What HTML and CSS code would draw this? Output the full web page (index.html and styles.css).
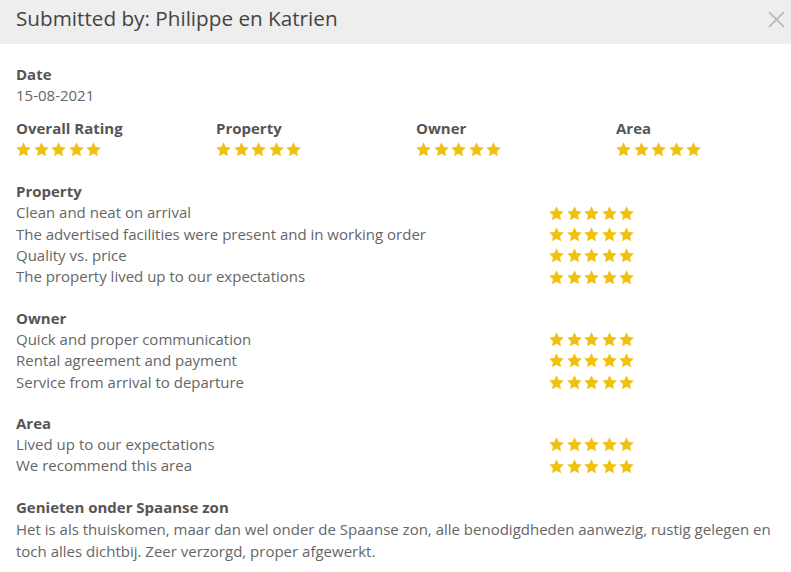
FILE: index.html
```html
<!DOCTYPE html>
<html lang="en">
<head>
<meta charset="utf-8">
<title>Review</title>
<link rel="stylesheet" href="styles.css">
</head>
<body>
<svg width="0" height="0" class="defs">
  <defs>
    <symbol id="star" viewBox="0 0 24 24">
      <path d="M12 1.8l3.1 6.6 7.2.9-5.3 5 1.4 7.1L12 17.9l-6.4 3.5 1.4-7.1-5.3-5 7.2-.9z"/>
    </symbol>
  </defs>
</svg>
<div class="modal">
  <header class="modal-head">
    <h1 class="title">Submitted by: Philippe en Katrien</h1>
    <span class="close" aria-label="Close">
      <svg viewBox="0 0 16 16" width="17" height="17"><path d="M1 1L15 15M15 1L1 15"/></svg>
    </span>
  </header>
  <div class="modal-body">
    <div class="block">
      <div class="label">Date</div>
      <div class="text">15-08-2021</div>
    </div>

    <div class="summary">
      <div class="sum-col">
        <div class="label">Overall Rating</div>
        <div class="stars"><svg><use href="#star"/></svg><svg><use href="#star"/></svg><svg><use href="#star"/></svg><svg><use href="#star"/></svg><svg><use href="#star"/></svg></div>
      </div>
      <div class="sum-col">
        <div class="label">Property</div>
        <div class="stars"><svg><use href="#star"/></svg><svg><use href="#star"/></svg><svg><use href="#star"/></svg><svg><use href="#star"/></svg><svg><use href="#star"/></svg></div>
      </div>
      <div class="sum-col">
        <div class="label">Owner</div>
        <div class="stars"><svg><use href="#star"/></svg><svg><use href="#star"/></svg><svg><use href="#star"/></svg><svg><use href="#star"/></svg><svg><use href="#star"/></svg></div>
      </div>
      <div class="sum-col">
        <div class="label">Area</div>
        <div class="stars"><svg><use href="#star"/></svg><svg><use href="#star"/></svg><svg><use href="#star"/></svg><svg><use href="#star"/></svg><svg><use href="#star"/></svg></div>
      </div>
    </div>

    <div class="section">
      <div class="label">Property</div>
      <div class="row"><span class="text">Clean and neat on arrival</span><span class="stars"><svg><use href="#star"/></svg><svg><use href="#star"/></svg><svg><use href="#star"/></svg><svg><use href="#star"/></svg><svg><use href="#star"/></svg></span></div>
      <div class="row"><span class="text">The advertised facilities were present and in working order</span><span class="stars"><svg><use href="#star"/></svg><svg><use href="#star"/></svg><svg><use href="#star"/></svg><svg><use href="#star"/></svg><svg><use href="#star"/></svg></span></div>
      <div class="row"><span class="text">Quality vs. price</span><span class="stars"><svg><use href="#star"/></svg><svg><use href="#star"/></svg><svg><use href="#star"/></svg><svg><use href="#star"/></svg><svg><use href="#star"/></svg></span></div>
      <div class="row"><span class="text">The property lived up to our expectations</span><span class="stars"><svg><use href="#star"/></svg><svg><use href="#star"/></svg><svg><use href="#star"/></svg><svg><use href="#star"/></svg><svg><use href="#star"/></svg></span></div>
    </div>

    <div class="section">
      <div class="label">Owner</div>
      <div class="row"><span class="text">Quick and proper communication</span><span class="stars"><svg><use href="#star"/></svg><svg><use href="#star"/></svg><svg><use href="#star"/></svg><svg><use href="#star"/></svg><svg><use href="#star"/></svg></span></div>
      <div class="row"><span class="text">Rental agreement and payment</span><span class="stars"><svg><use href="#star"/></svg><svg><use href="#star"/></svg><svg><use href="#star"/></svg><svg><use href="#star"/></svg><svg><use href="#star"/></svg></span></div>
      <div class="row"><span class="text">Service from arrival to departure</span><span class="stars"><svg><use href="#star"/></svg><svg><use href="#star"/></svg><svg><use href="#star"/></svg><svg><use href="#star"/></svg><svg><use href="#star"/></svg></span></div>
    </div>

    <div class="section">
      <div class="label">Area</div>
      <div class="row"><span class="text">Lived up to our expectations</span><span class="stars"><svg><use href="#star"/></svg><svg><use href="#star"/></svg><svg><use href="#star"/></svg><svg><use href="#star"/></svg><svg><use href="#star"/></svg></span></div>
      <div class="row"><span class="text">We recommend this area</span><span class="stars"><svg><use href="#star"/></svg><svg><use href="#star"/></svg><svg><use href="#star"/></svg><svg><use href="#star"/></svg><svg><use href="#star"/></svg></span></div>
    </div>

    <div class="review">
      <div class="review-title">Genieten onder Spaanse zon</div>
      <p class="review-text">Het is als thuiskomen, maar dan wel onder de Spaanse zon, alle benodigdheden aanwezig, rustig gelegen en toch alles dichtbij. Zeer verzorgd, proper afgewerkt.</p>
    </div>
  </div>
</div>
</body>
</html>
```

FILE: styles.css
```css
* { box-sizing: border-box; }

html, body {
  margin: 0;
  padding: 0;
  background: #ffffff;
}

body {
  font-family: "Open Sans", "Liberation Sans", sans-serif;
  font-size: 15px;
  color: #666666;
  overflow: hidden;
}

.defs {
  position: absolute;
  width: 0;
  height: 0;
}

.modal-head {
  height: 44px;
  background: #eeeeee;
  display: flex;
  align-items: center;
  justify-content: space-between;
  padding: 0 6px 0 16px;
}

.title {
  margin: 0;
  font-size: 20.7px;
  font-weight: 400;
  color: #444444;
  line-height: 36px;
  padding-bottom: 8px;
}

.close {
  display: flex;
  width: 17px;
  height: 17px;
  margin-bottom: 6px;
}

.close svg path {
  stroke: #b8b8b8;
  stroke-width: 1.6;
  fill: none;
}

.modal-body {
  padding: 20px 16px 0 16px;
  line-height: 21.3px;
}

.label {
  font-weight: 700;
  color: #555555;
}

.text {
  color: #666666;
}

.summary {
  display: grid;
  grid-template-columns: repeat(4, 200px);
  margin-top: 11px;
  margin-bottom: 21px;
}

.stars {
  display: flex;
  align-items: center;
  gap: 0.5px;
  height: 21.3px;
  margin-left: -1px;
}

.stars svg {
  width: 17px;
  height: 17px;
  fill: #f0c20f;
}

.section {
  margin-bottom: 20px;
}

.row {
  display: grid;
  grid-template-columns: 533px auto;
  align-items: center;
}

.review-title {
  font-weight: 700;
  color: #555555;
}

.review-text {
  margin: 0;
  line-height: 22px;
  color: #666666;
}
```
